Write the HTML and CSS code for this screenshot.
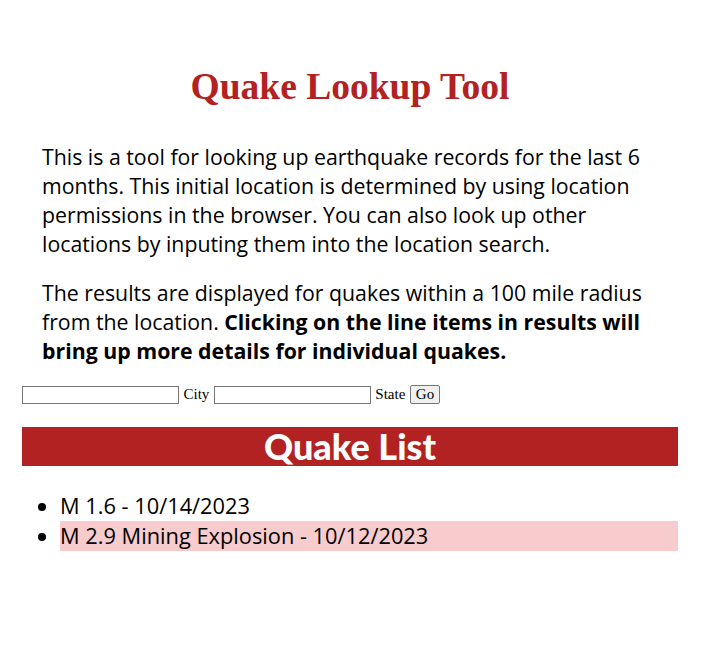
FILE: index.html
```html
<!DOCTYPE html>
<html lang="en">
<head>
<meta charset="utf-8">
<title>Quake Lookup Tool</title>
<link rel="stylesheet" href="styles.css">
</head>
<body>
<main class="page">
  <h1 class="title">Quake Lookup Tool</h1>
  <section class="intro">
    <p>This is a tool for looking up earthquake records for the last 6 months. This initial location is determined by using location permissions in the browser. You can also look up other locations by inputing them into the location search.</p>
    <p>The results are displayed for quakes within a 100 mile radius from the location. <strong>Clicking on the line items in results will bring up more details for individual quakes.</strong></p>
  </section>
  <form class="search">
    <input type="text" class="field"> City <input type="text" class="field"> State <button type="button" class="go">Go</button>
  </form>
  <h2 class="list-head">Quake List</h2>
  <ul class="quakes">
    <li class="quake">M 1.6 - 10/14/2023</li>
    <li class="quake active">M 2.9 Mining Explosion - 10/12/2023</li>
  </ul>
</main>
</body>
</html>
```
FILE: styles.css
```css
html, body {
  margin: 0;
  padding: 0;
  background: #fff;
}
.page {
  width: 656px;
  margin-left: 22px;
  font-family: "Liberation Serif", serif;
}
.title {
  margin: 0;
  padding-top: 66px;
  height: 46px;
  line-height: 42px;
  text-align: center;
  color: #b22222;
  font-size: 37.5px;
  font-weight: bold;
}
.intro {
  padding: 30px 20px 0 20px;
  font-family: "Open Sans", sans-serif;
  font-size: 21.3px;
  line-height: 29px;
  color: #000;
}
.intro p {
  margin: 0 0 20px 0;
}
.search {
  margin-top: 8px;
  font-size: 15px;
  display: flex;
  align-items: center;
  gap: 4.5px;
}
.field {
  width: 153px;
  height: 14px;
  border: 1px solid #767676;
  padding: 1px;
  margin: 0;
}
.go {
  font-family: "Liberation Serif", serif;
  font-size: 15px;
  padding: 0 5px;
  border: 1px solid #767676;
  background: #efefef;
  border-radius: 2px;
}
.list-head {
  margin: 23px 0 0 0;
  height: 39px;
  line-height: 39px;
  background: #b22222;
  color: #fff;
  text-align: center;
  font-family: "Lato", sans-serif;
  font-weight: 900;
  font-size: 36px;
}
.quakes {
  margin: 25px 0 0 0;
  padding-left: 38px;
  font-family: "Open Sans", sans-serif;
  font-size: 21.8px;
  line-height: 30px;
}
.quake.active {
  background: #f8cccc;
}
```
